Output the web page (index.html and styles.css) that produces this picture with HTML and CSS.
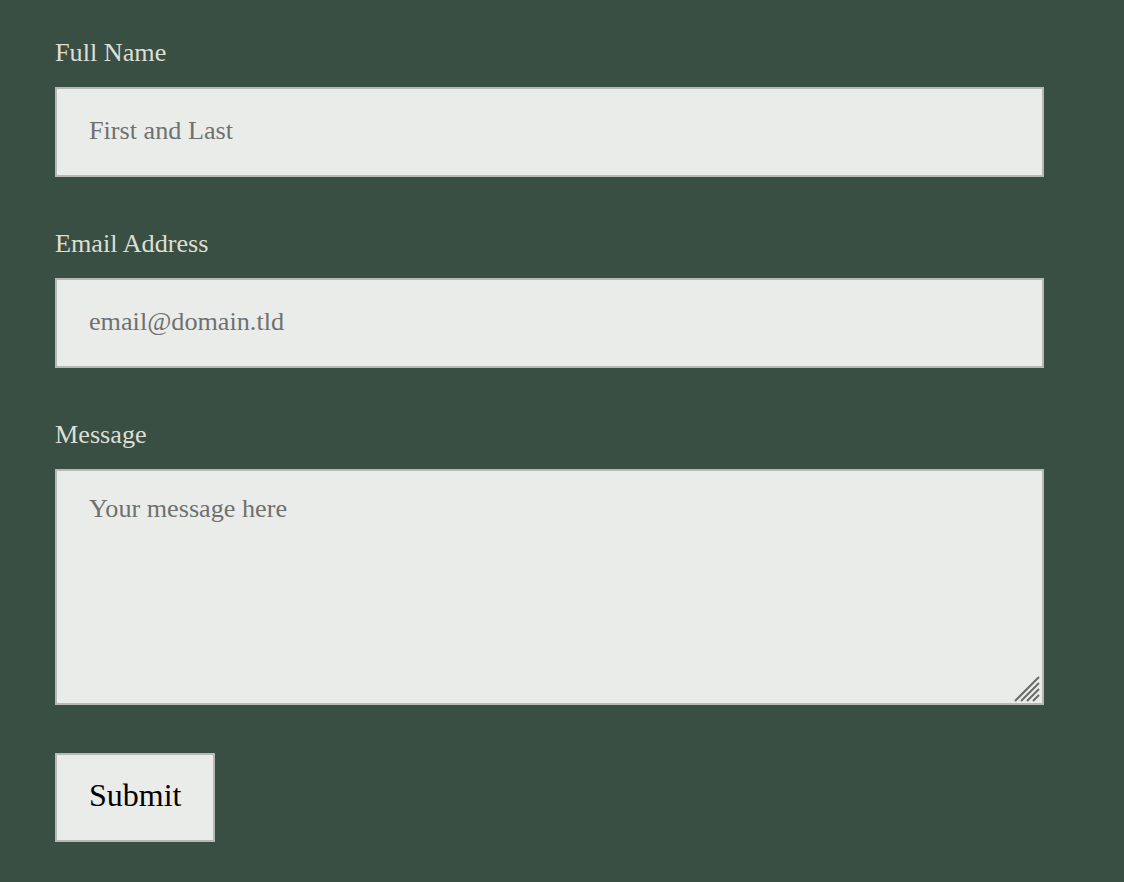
FILE: index.html
```html
<!DOCTYPE html>
<html lang="en">
<head>
<meta charset="utf-8">
<title>Contact</title>
<link rel="stylesheet" href="styles.css">
</head>
<body>
<form class="contact-form">
  <div class="field">
    <label class="field-label" for="name">Full Name</label>
    <input class="field-input" id="name" type="text" placeholder="First and Last">
  </div>
  <div class="field">
    <label class="field-label" for="email">Email Address</label>
    <input class="field-input" id="email" type="email" placeholder="email@domain.tld">
  </div>
  <div class="field field-last">
    <label class="field-label" for="message">Message</label>
    <div class="textarea-wrap">
      <textarea class="field-textarea" id="message" placeholder="Your message here"></textarea>
      <svg class="resize-grip" width="28" height="28" viewBox="0 0 28 28" aria-hidden="true">
        <g stroke="#6a6a6a" stroke-width="2" stroke-linecap="butt">
          <line x1="1" y1="27" x2="25" y2="3"/>
          <line x1="7" y1="27" x2="25" y2="9"/>
          <line x1="13" y1="27" x2="25" y2="15"/>
          <line x1="19" y1="27" x2="25" y2="21"/>
        </g>
      </svg>
    </div>
  </div>
  <button class="submit-btn" type="submit">Submit</button>
</form>
</body>
</html>
```
FILE: styles.css
```css
html, body {
  margin: 0;
  padding: 0;
  background: #3a4f44;
}
body {
  font-family: "Liberation Serif", "Times New Roman", serif;
}
.contact-form {
  display: flex;
  flex-direction: column;
  align-items: flex-start;
  padding: 38px 0 0 55px;
}
.field {
  display: flex;
  flex-direction: column;
  margin-bottom: 52px;
}
.field-last {
  margin-bottom: 48px;
}
.field-label {
  font-size: 26.2px;
  line-height: 30px;
  color: #dedfd3;
  margin-bottom: 19px;
}
.field-input,
.field-textarea {
  box-sizing: border-box;
  width: 989px;
  margin: 0;
  border: 2px solid #b5bab5;
  background: #eaecea;
  font-family: "Liberation Serif", "Times New Roman", serif;
  font-size: 26.2px;
  color: #222;
  outline: none;
  border-radius: 0;
}
.field-input {
  height: 90px;
  padding: 0 32px 3px;
}
.textarea-wrap {
  position: relative;
  display: flex;
}
.field-textarea {
  height: 236px;
  padding: 23px 32px;
  line-height: normal;
  resize: none;
  display: block;
}
.resize-grip {
  position: absolute;
  right: 2px;
  bottom: 3px;
  pointer-events: none;
}
.field-input::placeholder,
.field-textarea::placeholder {
  color: #6f716f;
  opacity: 1;
}
.submit-btn {
  box-sizing: border-box;
  width: 160px;
  height: 89px;
  margin: 0;
  padding: 0 32px 5px;
  border: 2px solid #b5bab5;
  border-radius: 0;
  background: #eaecea;
  color: #000;
  font-family: "Liberation Serif", "Times New Roman", serif;
  font-size: 32px;
  cursor: pointer;
}
```
